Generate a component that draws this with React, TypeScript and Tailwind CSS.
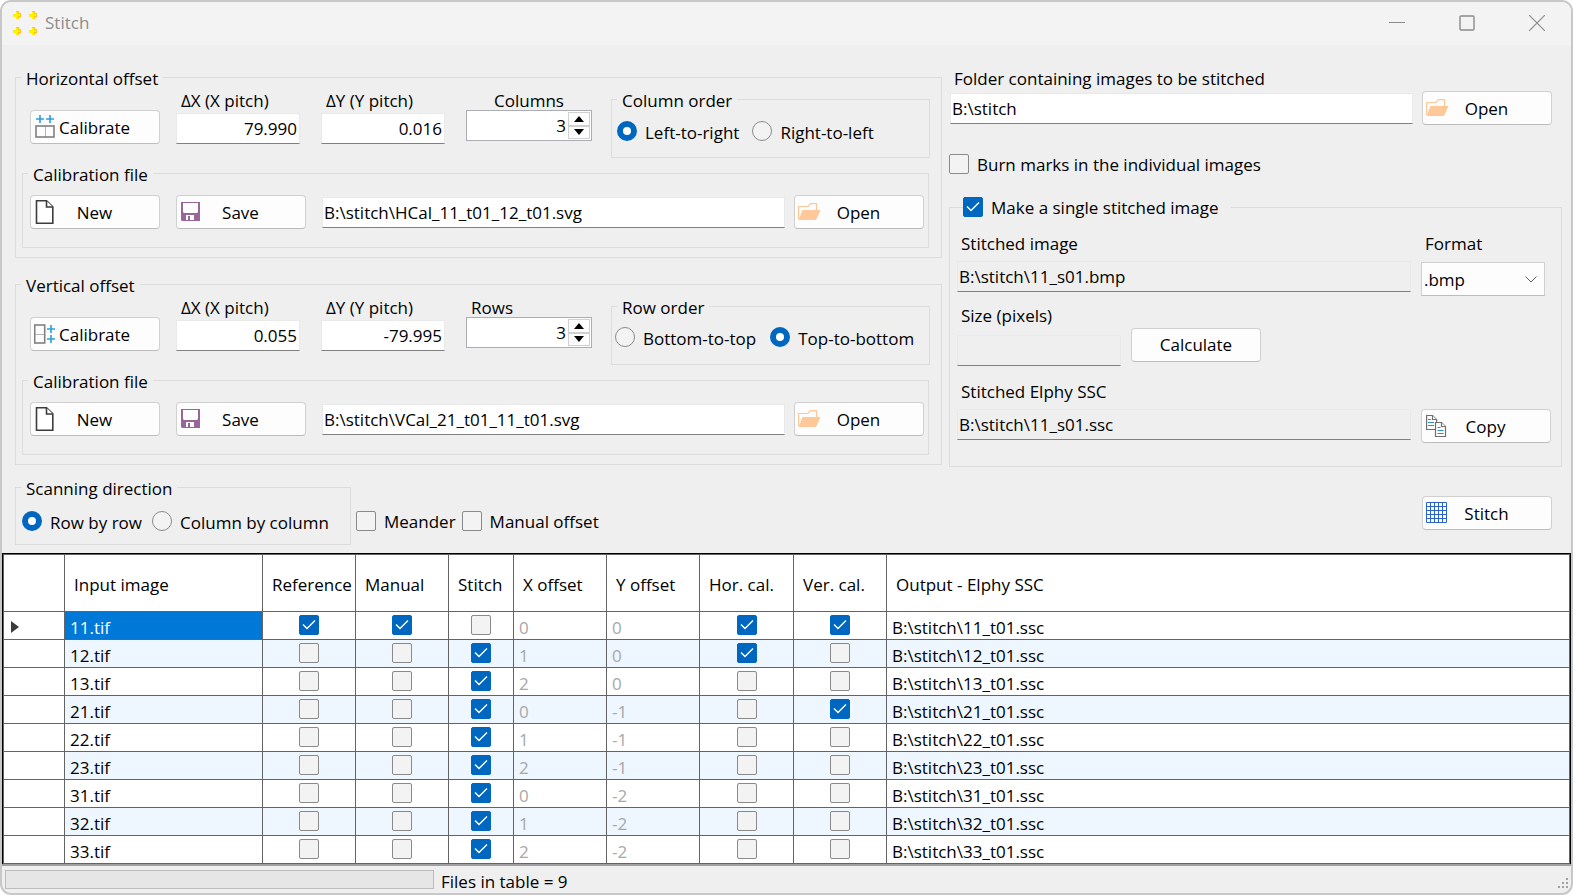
import { useId } from 'react'
import type { ReactNode } from 'react'

type Mark = 0 | 1

interface Row {
  id: string
  reference: Mark
  manual: Mark
  stitch: Mark
  x: number
  y: number
  hor: Mark
  ver: Mark
}

const ROWS: Row[] = [
  { id: '11', reference: 1, manual: 1, stitch: 0, x: 0, y: 0,  hor: 1, ver: 1 },
  { id: '12', reference: 0, manual: 0, stitch: 1, x: 1, y: 0,  hor: 1, ver: 0 },
  { id: '13', reference: 0, manual: 0, stitch: 1, x: 2, y: 0,  hor: 0, ver: 0 },
  { id: '21', reference: 0, manual: 0, stitch: 1, x: 0, y: -1, hor: 0, ver: 1 },
  { id: '22', reference: 0, manual: 0, stitch: 1, x: 1, y: -1, hor: 0, ver: 0 },
  { id: '23', reference: 0, manual: 0, stitch: 1, x: 2, y: -1, hor: 0, ver: 0 },
  { id: '31', reference: 0, manual: 0, stitch: 1, x: 0, y: -2, hor: 0, ver: 0 },
  { id: '32', reference: 0, manual: 0, stitch: 1, x: 1, y: -2, hor: 0, ver: 0 },
  { id: '33', reference: 0, manual: 0, stitch: 1, x: 2, y: -2, hor: 0, ver: 0 },
]

const COLUMNS = [
  { label: '',                   width: 'w-[61px]' },
  { label: 'Input image',        width: 'w-[198px]' },
  { label: 'Reference',          width: 'w-[93px]' },
  { label: 'Manual',             width: 'w-[93px]' },
  { label: 'Stitch',             width: 'w-[65px]' },
  { label: 'X offset',           width: 'w-[93px]' },
  { label: 'Y offset',           width: 'w-[93px]' },
  { label: 'Hor. cal.',          width: 'w-[94px]' },
  { label: 'Ver. cal.',          width: 'w-[93px]' },
  { label: 'Output - Elphy SSC', width: '' },
]

/* ---------- icons ---------- */

function AppIcon() {
  const spots = [[0, 0], [16, 0], [0, 16], [16, 16]]
  return (
    <svg width="24" height="24" viewBox="0 0 24 24" shapeRendering="crispEdges" aria-hidden="true">
      {spots.map(([x, y]) => (
        <g key={`${x}-${y}`}>
          <path d={`M${x + 3} ${y}h3v2h2v4h-2v2h-3v-2h-3v-3h3z`} fill="#ffc020" />
          <path d={`M${x + 3} ${y + 1}h2v2h2v2h-2v3h-2v-2h-3v-3h3z`} fill="#fff200" />
        </g>
      ))}
    </svg>
  )
}

function HorizontalIcon() {
  return (
    <svg width="22" height="24" viewBox="0 0 22 24" fill="none" className="ml-px" aria-hidden="true">
      <path d="M5 0v8M1 4h8M15 0v8M11 4h8" stroke="#2a9fd8" strokeWidth="1.6" />
      <path d="M10.5 11v11" stroke="#b4b4b4" />
      <rect x="1" y="11" width="18" height="11" stroke="#808080" strokeWidth="1.6" />
    </svg>
  )
}

function VerticalIcon() {
  return (
    <svg width="22" height="24" viewBox="0 0 22 24" fill="none" aria-hidden="true">
      <path d="M17 3v8M13 7h8M17 13v8M13 17h8" stroke="#2a9fd8" strokeWidth="1.6" />
      <path d="M0 12.5h10" stroke="#b4b4b4" />
      <rect x="0.700" y="3" width="10" height="18" stroke="#808080" strokeWidth="1.6" />
    </svg>
  )
}

function NewIcon() {
  return (
    <svg width="22" height="24" viewBox="0 0 22 24" fill="#fff" stroke="#3c3c3c" strokeWidth="1.6" className="ml-px" aria-hidden="true">
      <path d="M1.500.8h10l6.300 6v16.400H1.500z" />
      <path d="M11.500.8v6.200h6.300" />
    </svg>
  )
}

function SaveIcon() {
  return (
    <svg width="22" height="20" viewBox="0 0 22 20" className="ml-px" aria-hidden="true">
      <path d="M0 0h19v19H1l-1-1z" fill="#996699" />
      <path d="M2 1h15v9l-1 1H3l-1-1z" fill="#fff" />
      <path d="M5 13h8v5H5z" fill="#fff" />
      <path d="M7 14h2v4H7z" fill="#996699" />
    </svg>
  )
}

function FolderIcon() {
  return (
    <svg width="23" height="18" viewBox="0 0 23 18" aria-hidden="true">
      <path d="M.6 16V3.500h9.500L12.500.6H18.500V7" fill="none" stroke="#ffc899" strokeWidth="1.200" />
      <path d="M4.500 7H22.500L18 17H.5z" fill="#ffc899" />
    </svg>
  )
}

function CopyIcon() {
  return (
    <svg width="22" height="24" viewBox="0 0 22 24" fill="#fff" strokeWidth="1.200" className="ml-px" aria-hidden="true">
      <path d="M.6 1.500h6l4 4v10H.6z" stroke="#6e6e6e" />
      <path d="M6.500 1.500v4h4" stroke="#6e6e6e" />
      <path d="M2 5.500h3M2 8.500h6M2 11.500h6" stroke="#2a8fd0" />
      <path d="M9.500 8.500h6l4 4v10h-10z" stroke="#6e6e6e" />
      <path d="M15.500 8.500v4h4" stroke="#6e6e6e" />
      <path d="M11.500 13.500h3M11.500 16.500h6M11.500 19.500h6" stroke="#2a8fd0" />
    </svg>
  )
}

function GridIcon() {
  return (
    <svg width="22" height="22" viewBox="0 0 22 22" fill="none" stroke="#2b62d0" aria-hidden="true">
      <path d="M.5.5h20v20H.5zM4.500.5v20M8.500.5v20M12.500.5v20M16.500.5v20M.5 4.500h20M.5 8.500h20M.5 12.500h20M.5 16.500h20" />
    </svg>
  )
}

/* ---------- controls ---------- */

function IconButton({ icon, children, tight }: { icon?: ReactNode; children: string; tight?: boolean }) {
  return (
    <button
      type="button"
      className="flex h-[34px] w-[130px] shrink-0 items-center rounded border border-[#d0d0d0] border-b-[#bcbcbc] bg-[#fdfdfd] px-[3px] leading-6"
    >
      {icon && <span className="flex w-6 shrink-0">{icon}</span>}
      <span className={tight ? 'flex-1 pl-px pt-px text-left' : icon ? 'flex-1 pr-[25px] pt-px text-center' : 'flex-1 text-center'}>{children}</span>
    </button>
  )
}

const FIELD = 'h-[31px] min-w-0 border border-[#e9e9e9] border-b-[#808080] pl-px pr-[2px] outline-none'

function Check({ label, checked }: { label?: string; checked?: boolean }) {
  return (
    <span className="inline-grid size-5 shrink-0">
      <input
        type="checkbox"
        aria-label={label}
        defaultChecked={checked}
        className="peer col-start-1 row-start-1 size-5 appearance-none rounded-[2px] border border-[#8a8a8a] bg-[#f3f3f3] checked:border-[#0067c0] checked:bg-[#0067c0]"
      />
      <svg
        viewBox="0 0 20 20"
        className="pointer-events-none invisible col-start-1 row-start-1 size-5 peer-checked:visible"
        fill="none"
        stroke="#fff"
        strokeWidth="1.400"
        aria-hidden="true"
      >
        <path d="M4 9.500l4 4 8-8" />
      </svg>
    </span>
  )
}

function CheckLabel({ children, checked }: { children: string; checked?: boolean }) {
  return (
    <label className="flex h-5 items-center gap-2 leading-5">
      <Check checked={checked} />
      <span className="pt-[2px]">{children}</span>
    </label>
  )
}

function Radio({ name, children, checked }: { name: string; children: string; checked?: boolean }) {
  return (
    <label className="flex h-5 items-center gap-2 whitespace-nowrap leading-5">
      <input
        type="radio"
        name={name}
        defaultChecked={checked}
        className="size-5 shrink-0 appearance-none rounded-full border border-[#8a8a8a] bg-[#f3f3f3] checked:border-[6px] checked:border-[#0067c0] checked:bg-white"
      />
      <span className="pt-[3px]">{children}</span>
    </label>
  )
}

function Group({ title, className, children }: { title: ReactNode; className?: string; children: ReactNode }) {
  return (
    <fieldset className={`min-w-0 border border-[#dcdcdc] ${className ?? ''}`}>
      <legend className="ml-[5px] h-5 px-[5px] leading-6">{title}</legend>
      {children}
    </fieldset>
  )
}

function PitchField({ label, value }: { label: string; value: string }) {
  const id = useId()
  return (
    <div className="flex w-[124px] flex-col pt-[2px]">
      <label htmlFor={id} className="h-6 whitespace-nowrap pl-[5px] leading-6">{label}</label>
      <input id={id} defaultValue={value} className={`${FIELD} bg-white text-right`} />
    </div>
  )
}

function Spinner({ label, align }: { label: string; align: string }) {
  const id = useId()
  return (
    <div className="flex w-[126px] flex-col pt-[2px]">
      <label htmlFor={id} className={`h-[21px] leading-6 ${align}`}>{label}</label>
      <div className="flex h-[31px] border border-[#abadb3] bg-white p-px">
        <input id={id} defaultValue="3" inputMode="numeric" className="min-w-0 flex-1 pr-[2px] text-right outline-none" />
        <div className="flex w-[22px] flex-col">
          <button type="button" aria-label={`${label} up`} className="flex flex-1 items-center justify-center border border-[#d0d0d0] bg-[#fdfdfd]">
            <svg width="10" height="6" viewBox="0 0 10 6" aria-hidden="true"><path d="M0 6l5-6 5 6z" /></svg>
          </button>
          <button type="button" aria-label={`${label} down`} className="flex flex-1 items-center justify-center border border-[#d0d0d0] bg-[#fdfdfd]">
            <svg width="10" height="6" viewBox="0 0 10 6" aria-hidden="true"><path d="M0 0h10l-5 6z" /></svg>
          </button>
        </div>
      </div>
    </div>
  )
}

interface OffsetProps {
  title: string
  icon: ReactNode
  dx: string
  dy: string
  count: ReactNode
  order: ReactNode
  file: string
}

function OffsetGroup({ title, icon, dx, dy, count, order, file }: OffsetProps) {
  return (
    <Group title={title} className="pb-[9px]">
      <div className="flex items-start pl-[14px] pr-[11px]">
        <div className="pt-[23px]">
          <IconButton icon={icon} tight>Calibrate</IconButton>
        </div>
        <div className="ml-4 flex gap-[21px]">
          <PitchField label="ΔX (X pitch)" value={dx} />
          <PitchField label="ΔY (Y pitch)" value={dy} />
          {count}
        </div>
        {order}
      </div>
      <Group title="Calibration file" className="ml-[6px] mr-3 mt-[5px]">
        <div className="flex items-center pb-[18px] pl-[7px] pr-1 pt-3">
          <IconButton icon={<NewIcon />}>New</IconButton>
          <div className="ml-4 flex flex-1 items-center">
            <IconButton icon={<SaveIcon />}>Save</IconButton>
            <input aria-label={`${title} calibration file`} defaultValue={file} className={`${FIELD} ml-4 mr-[9px] flex-1 bg-white`} />
            <IconButton icon={<FolderIcon />}>Open</IconButton>
          </div>
        </div>
      </Group>
    </Group>
  )
}

/* ---------- window parts ---------- */

function TitleBar() {
  return (
    <header className="flex h-[43px] items-center bg-[#f3f3f3] pb-[2px] pl-[11px] text-[#8c8c8c]">
      <AppIcon />
      <h1 className="flex-1 pl-2">Stitch</h1>
      <div className="flex gap-[22px] pr-[10px]">
        <button type="button" aria-label="Minimize" className="px-4 py-3">
          <svg width="16" height="16" viewBox="0 0 16 16" stroke="currentColor" aria-hidden="true"><path d="M0 7.500h16" /></svg>
        </button>
        <button type="button" aria-label="Maximize" className="px-4 py-3">
          <svg width="16" height="16" viewBox="0 0 16 16" fill="none" stroke="currentColor" strokeWidth="1.400" aria-hidden="true"><rect x="1" y="1" width="14" height="14" rx="1" /></svg>
        </button>
        <button type="button" aria-label="Close" className="px-4 py-3">
          <svg width="16" height="16" viewBox="0 0 16 16" stroke="currentColor" strokeWidth="1.200" aria-hidden="true"><path d="M0 0l16 16M16 0L0 16" /></svg>
        </button>
      </div>
    </header>
  )
}

function OutputPanel() {
  return (
    <div className="flex min-w-0 flex-col">
      <label htmlFor="folder" className="pl-[5px] leading-6">Folder containing images to be stitched</label>
      <div className="flex items-center gap-[9px] pl-px pr-[10px]">
        <input id="folder" defaultValue="B:\stitch" className={`${FIELD} flex-1 bg-white`} />
        <IconButton icon={<FolderIcon />}>Open</IconButton>
      </div>
      <div className="mb-[23px] mt-[29px] flex">
        <CheckLabel>Burn marks in the individual images</CheckLabel>
      </div>
      <fieldset className="min-w-0 border border-[#dcdcdc] pb-[23px] pl-[7px] pr-[10px]">
        <legend className="ml-[6px] h-5 pr-3">
          <CheckLabel checked>Make a single stitched image</CheckLabel>
        </legend>
        <div className="mt-[15px] grid grid-cols-[1fr_130px] gap-x-[10px]">
          <label htmlFor="image" className="pl-1 leading-6">Stitched image</label>
          <label htmlFor="format" className="pl-1 leading-6">Format</label>
          <input id="image" readOnly defaultValue="B:\stitch\11_s01.bmp" className={`${FIELD} mt-[5px] bg-transparent`} />
          <div className="mt-[6px] grid w-[124px]">
            <select
              id="format"
              defaultValue=".bmp"
              className="col-start-1 row-start-1 h-[34px] appearance-none border border-[#d0d0d0] border-b-[#bcbcbc] bg-[#fdfdfd] pl-[2px] pt-[2px]"
            >
              <option>.bmp</option>
              <option>.tif</option>
              <option>.png</option>
            </select>
            <svg width="12" height="7" viewBox="0 0 12 7" fill="none" stroke="#606060" className="pointer-events-none col-start-1 row-start-1 mr-2 self-center justify-self-end" aria-hidden="true">
              <path d="M.5.5l5.500 5.500 5.500-5.500" />
            </svg>
          </div>
        </div>
        <div className="mt-2">
          <label htmlFor="size" className="block pl-1 leading-6">Size (pixels)</label>
          <div className="flex gap-[10px]">
            <input id="size" readOnly className={`${FIELD} mt-[7px] w-[164px] bg-transparent`} />
            <IconButton>Calculate</IconButton>
          </div>
        </div>
        <label htmlFor="ssc" className="mb-[5px] mt-[14px] block pl-1 leading-6">Stitched Elphy SSC</label>
        <div className="flex gap-[10px]">
          <input id="ssc" readOnly defaultValue="B:\stitch\11_s01.ssc" className={`${FIELD} flex-1 bg-transparent`} />
          <IconButton icon={<CopyIcon />}>Copy</IconButton>
        </div>
      </fieldset>
    </div>
  )
}

function ImageTable() {
  const cell = 'border-b border-r border-[#646464] p-0 last:border-r-0'
  return (
    <div className="border border-b-0 border-black">
      <table className="w-full table-fixed border-separate border-spacing-0 border border-b-0 border-[#646464] bg-white">
        <thead>
          <tr className="h-[57px]">
            {COLUMNS.map(({ label, width }) => (
              <th key={label} scope="col" className={`${cell} ${width} whitespace-nowrap text-left font-normal`}>
                <span className="block pl-[9px] pt-[3px]">{label}</span>
              </th>
            ))}
          </tr>
        </thead>
        <tbody>
          {ROWS.map((row, i) => {
            const tone = i % 2 ? 'bg-[#eef7ff]' : 'bg-white'
            const box = `${cell} ${tone} text-center align-top leading-none pt-[3px]`
            const text = `${cell} ${tone} pl-[5px] leading-[23px] pt-1`
            return (
              <tr key={row.id} className="h-7">
                <td className={cell}>
                  {i === 0 && (
                    <svg width="8" height="12" viewBox="0 0 8 12" fill="#3c3c3c" className="ml-[7px] mt-[3px]" aria-hidden="true"><path d="M0 0l8 6-8 6z" /></svg>
                  )}
                </td>
                <td className={i === 0 ? `${cell} bg-[#0078d7] pl-[5px] pt-1 leading-[23px] text-white` : text}>{row.id}.tif</td>
                <td className={box}><Check label={`${row.id} reference`} checked={!!row.reference} /></td>
                <td className={box}><Check label={`${row.id} manual`} checked={!!row.manual} /></td>
                <td className={box}><Check label={`${row.id} stitch`} checked={!!row.stitch} /></td>
                <td className={`${text} text-[#a8a8a8]`}>{row.x}</td>
                <td className={`${text} text-[#a8a8a8]`}>{row.y}</td>
                <td className={box}><Check label={`${row.id} horizontal calibration`} checked={!!row.hor} /></td>
                <td className={box}><Check label={`${row.id} vertical calibration`} checked={!!row.ver} /></td>
                <td className={text}>B:\stitch\{row.id}_t01.ssc</td>
              </tr>
            )
          })}
        </tbody>
      </table>
    </div>
  )
}

function StatusBar() {
  return (
    <footer className="flex h-[29px] border-t-2 border-[#a0a0a0] pl-[3px]">
      <div role="progressbar" aria-label="Progress" aria-valuenow={0} className="mt-1 h-[19px] w-[429px] border border-[#bcbcbc] bg-[#e6e6e6]" />
      <p className="flex-1 pl-[7px] pt-[5px] leading-[22px]">Files in table = {ROWS.length}</p>
      <svg width="12" height="12" viewBox="0 0 12 12" fill="#a0a0a0" className="mb-[3px] mr-px self-end" aria-hidden="true">
        <path d="M8 0h2v2H8zM4 4h2v2H4zM8 4h2v2H8zM0 8h2v2H0zM4 8h2v2H4zM8 8h2v2H8z" />
      </svg>
    </footer>
  )
}

export default function App() {
  return (
    <div className="min-h-screen overflow-hidden rounded-[11px] border-2 border-[#c8c8c8] bg-[#efefef] font-['Open_Sans',sans-serif] text-[17px] text-black">
      <TitleBar />
      <main>
        <div className="grid grid-cols-[927fr_613fr] gap-[7px] pl-[13px] pr-[9px] pt-[22px]">
          <div className="flex min-w-0 flex-col gap-4">
            <OffsetGroup
              title="Horizontal offset"
              icon={<HorizontalIcon />}
              dx="79.990"
              dy="0.016"
              count={<Spinner label="Columns" align="pl-7" />}
              file="B:\stitch\HCal_11_t01_12_t01.svg"
              order={
                <Group title="Column order" className="ml-[19px] mt-[2px] flex-1">
                  <div className="flex gap-[13px] pb-4 pl-[5px] pt-3">
                    <Radio name="column-order" checked>Left-to-right</Radio>
                    <Radio name="column-order">Right-to-left</Radio>
                  </div>
                </Group>
              }
            />
            <OffsetGroup
              title="Vertical offset"
              icon={<VerticalIcon />}
              dx="0.055"
              dy="-79.995"
              count={<Spinner label="Rows" align="pl-[5px]" />}
              file="B:\stitch\VCal_21_t01_11_t01.svg"
              order={
                <Group title="Row order" className="ml-[19px] mt-[2px] flex-1">
                  <div className="flex gap-[14px] pb-[17px] pl-[3px] pt-[11px]">
                    <Radio name="row-order">Bottom-to-top</Radio>
                    <Radio name="row-order" checked>Top-to-bottom</Radio>
                  </div>
                </Group>
              }
            />
          </div>
          <OutputPanel />
        </div>
        <div className="flex items-start pb-2 pl-[13px] pr-[19px] pt-[10px]">
          <Group title="Scanning direction" className="w-[336px]">
            <div className="flex gap-[10px] pb-[13px] pl-[6px] pt-[14px]">
              <Radio name="scan" checked>Row by row</Radio>
              <Radio name="scan">Column by column</Radio>
            </div>
          </Group>
          <div className="ml-[5px] flex flex-1 gap-[6px] pt-[34px]">
            <CheckLabel>Meander</CheckLabel>
            <CheckLabel>Manual offset</CheckLabel>
          </div>
          <div className="pt-[19px]">
            <IconButton icon={<GridIcon />}>Stitch</IconButton>
          </div>
        </div>
        <ImageTable />
      </main>
      <StatusBar />
    </div>
  )
}
